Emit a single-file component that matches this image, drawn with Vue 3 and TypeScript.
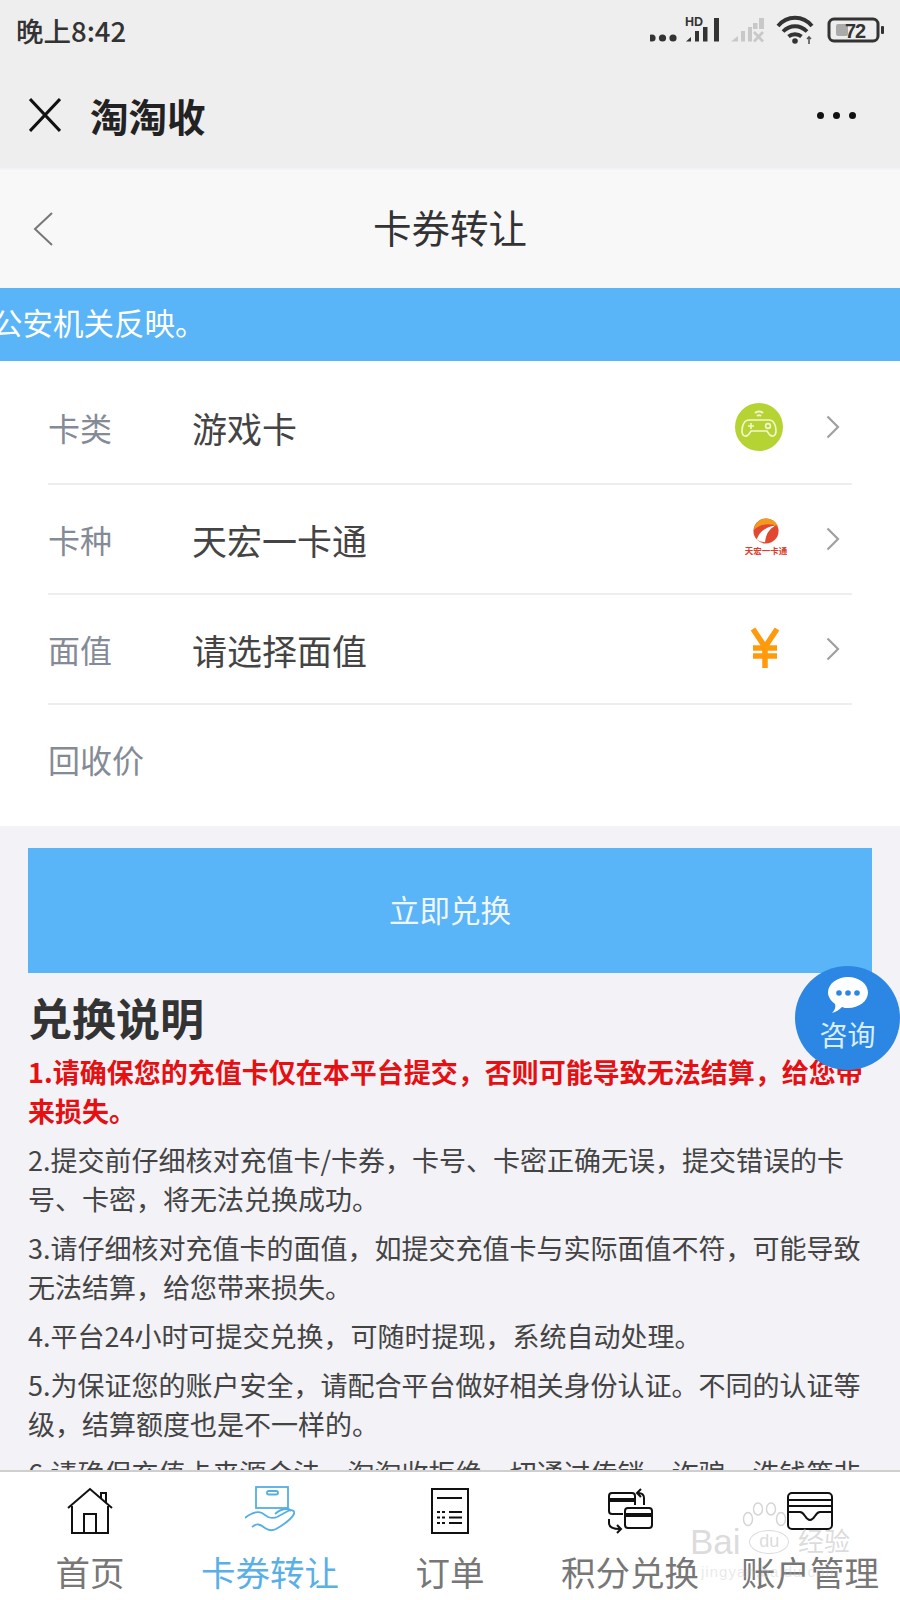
<template>
  <div class="phone">
    <div class="top-bar">
      <div class="status">
        <span class="time">晚上8:42</span>
        <svg class="status-icons" width="250" height="40" viewBox="650 10 250 40">
          <g fill="#333">
            <circle cx="652" cy="38" r="3.6" />
            <circle cx="662.5" cy="38" r="3.6" />
            <circle cx="673" cy="38" r="3.6" />
            <text x="685" y="26" font-size="12.5" font-weight="700" font-family="'Liberation Sans', sans-serif">HD</text>
            <path d="M686 41.5 L691 37 V41.5Z" />
            <rect x="695" y="31" width="4" height="10.5" />
            <rect x="703" y="27" width="4.5" height="14.5" />
            <rect x="714" y="18" width="5" height="23.5" />
          </g>
          <g fill="#c8c8c8">
            <path d="M731 41.5 L738 36 V41.5Z" />
            <rect x="741" y="31" width="4" height="10.5" />
            <rect x="748" y="27" width="4" height="14.5" />
            <rect x="753" y="23" width="4.5" height="6" />
            <rect x="759" y="18" width="5" height="11" />
            <path d="M754 32 L763 41.5 M763 32 L754 41.5" stroke="#c8c8c8" stroke-width="2.6" fill="none" />
          </g>
          <g fill="none" stroke="#333" stroke-width="3.8">
            <path d="M778 26 C787 15 803 15 812 26" />
            <path d="M783 31.5 C790 24.5 800 24.5 807 31.5" />
            <path d="M788.5 36.5 C792 33.5 798 33.5 801.5 36.5" />
          </g>
          <circle cx="795" cy="41" r="2.8" fill="#333" />
          <path d="M809 37 V44 M807 39 L809 37 L811 39" stroke="#555" stroke-width="1.6" fill="none" />
          <rect x="829" y="19" width="49" height="22" rx="5" fill="none" stroke="#333" stroke-width="3" />
          <rect x="836" y="24" width="12" height="12" rx="2" fill="#aaa" />
          <text x="845" y="38" font-size="20" font-weight="700" fill="#333" font-family="'Liberation Sans', sans-serif" textLength="21">72</text>
          <rect x="881" y="26" width="3" height="8" rx="1" fill="#333" />
        </svg>
      </div>
      <div class="title-bar">
        <svg class="close-icon" width="32" height="34" viewBox="0 0 32 34">
          <path d="M1 1 L31 33 M31 1 L1 33" stroke="#111" stroke-width="3" fill="none" />
        </svg>
        <span class="app-title">淘淘收</span>
        <span class="more"><i /><i /><i /></span>
      </div>
    </div>

    <div class="nav-bar">
      <svg class="back-icon" width="20" height="34" viewBox="0 0 20 34">
        <path d="M19 1 L2 17 L19 33" stroke="#777" stroke-width="2" fill="none" />
      </svg>
      <span class="nav-title">卡券转让</span>
    </div>

    <div class="banner"><span>公安机关反映。</span></div>

    <div class="content">
      <div class="form">
        <div v-for="row in rows" :key="row.label" class="row">
          <span class="row-label">{{ row.label }}</span>
          <span class="row-value">{{ row.value }}</span>
          <svg v-if="row.icon === 'game'" class="game-icon" width="48" height="48" viewBox="0 0 48 48">
            <circle cx="24" cy="24" r="24" fill="#b6d334" />
            <g fill="none" stroke="#f3f7cf" stroke-width="1.6">
              <path d="M14 17 H34 C39 17 41 23 41 28 C41 33 37 35 34 31 L32 28 H16 L14 31 C11 35 7 33 7 28 C7 23 9 17 14 17Z" />
              <path d="M13 23 H19 M16 20 V26" />
              <circle cx="33" cy="23" r="2.4" />
              <path d="M20 10 C22 8 26 8 28 10 M22 13 C23 12 25 12 26 13" stroke-width="2" />
            </g>
          </svg>
          <span v-else-if="row.icon === 'tianhong'" class="th-logo">
            <svg width="26" height="26" viewBox="0 0 28 28">
              <circle cx="14" cy="14" r="13.5" fill="#e2472f" />
              <path d="M1 13 C2 5 8 .5 14 .5 C20 .5 25 4 27 9 C18 5 8 6 1 13Z" fill="#f39a1e" />
              <path d="M4 23 C7 15 14 9 24 8 C18 12 14 16 13 26 C10 26 6 25 4 23Z" fill="#fff" />
            </svg>
            <span class="th-name">天宏一卡通</span>
          </span>
          <svg v-else class="yen-icon" width="30" height="42" viewBox="0 0 30 42">
            <path d="M3 2 L15 20 L27 2 M15 20 V41 M3 21 H27 M3 29 H27" stroke="#ff9a0c" stroke-width="5.5" fill="none" />
          </svg>
          <svg class="chevron" width="14" height="24" viewBox="0 0 14 24">
            <path d="M1.5 1.5 L12 12 L1.5 22.5" stroke="#a0a0a0" stroke-width="2.2" fill="none" />
          </svg>
        </div>
        <div class="row last">
          <span class="row-label">回收价</span>
        </div>
      </div>

      <div class="submit">立即兑换</div>

      <div class="notes">
        <h2>兑换说明</h2>
        <p class="warn">1.请确保您的充值卡仅在本平台提交，否则可能导致无法结算，给您带来损失。</p>
        <p v-for="n in notes" :key="n">{{ n }}</p>
      </div>

      <div class="consult">
        <svg width="40" height="36" viewBox="0 0 40 36">
          <path d="M20 0 C31 0 40 7 40 15.5 C40 24 31 31 20 31 C18 31 16 31 14 30 C11 33 8 35 4 36 C7 33 8 30 7 27 C3 24 0 20 0 15.5 C0 7 9 0 20 0Z" fill="#fff" />
          <circle cx="11" cy="16" r="2.8" fill="#2b87e3" />
          <circle cx="20" cy="16" r="2.8" fill="#2b87e3" />
          <circle cx="29" cy="16" r="2.8" fill="#2b87e3" />
        </svg>
        <span>咨询</span>
      </div>
    </div>

    <div class="tabs">
      <div v-for="tab in tabs" :key="tab.name" class="tab" :class="{ active: tab.name === '卡券转让' }">
        <svg v-if="tab.icon === 'home'" width="46" height="46" viewBox="0 0 46 46">
          <g fill="none" stroke="#111" stroke-width="2">
            <path d="M1 20 L23 1 L45 20" />
            <path d="M34 10 V5 H39 V15" />
            <path d="M5 18 V45 H41 V18" />
            <path d="M17 45 V26 H29 V45" />
          </g>
        </svg>
        <svg v-else-if="tab.icon === 'hand'" width="50" height="50" viewBox="0 0 50 50">
          <g fill="none" stroke="#55aee6" stroke-width="1.8">
            <rect x="11" y="1" width="32" height="21" />
            <rect x="22" y="5" width="11" height="3.5" rx="1.7" />
            <path d="M0 32 C6 27 12 25 17 27 L23 31 C26 32 30 32 32 31" />
            <path d="M7 41 C12 37 15 38 20 42 C24 45 27 45 31 43 C38 39 46 34 49 28 C50 25 47 23 43 25 L32 31" />
            <path d="M30 28 C33 25 38 23 42 23 C45 23 46 24 45 25" />
          </g>
        </svg>
        <svg v-else-if="tab.icon === 'order'" width="38" height="46" viewBox="0 0 38 46">
          <g fill="none" stroke="#111" stroke-width="2">
            <rect x="1" y="1" width="36" height="44" />
            <path d="M6 10 H31" />
            <path d="M6 24 H9 M11 24 H14 M18 24 H31 M6 29.5 H9 M11 29.5 H14 M18 29.5 H31 M6 35 H9 M11 35 H14 M18 35 H31" />
          </g>
        </svg>
        <svg v-else-if="tab.icon === 'swap'" width="46" height="46" viewBox="0 0 46 46">
          <g fill="none" stroke="#111" stroke-width="2">
            <path d="M16 26 H5 C3 26 2 25 2 23 V8 C2 6 3 5 5 5 H25 C27 5 28 6 28 8 V17" />
            <rect x="18" y="20" width="27" height="20" rx="3" />
            <path d="M37 17 V10 C37 7 35 5 31 5 M34 1 L30 5 L34 9" />
            <path d="M2 31 V35 C2 39 5 41 13 41 M10 37 L14 41 L10 45" />
          </g>
          <rect x="2" y="10" width="26" height="4" fill="#111" />
          <rect x="18" y="25" width="27" height="4" fill="#111" />
        </svg>
        <svg v-else width="46" height="38" viewBox="0 0 46 38">
          <g fill="none" stroke="#111" stroke-width="2">
            <rect x="1" y="1" width="44" height="36" rx="4" />
            <path d="M1 8 H45 M1 14 H45" />
            <path d="M1 20 H13 C18 20 18 28 23 28 C28 28 28 20 33 20 H45" />
          </g>
        </svg>
        <span class="tab-name">{{ tab.name }}</span>
      </div>
    </div>

    <div class="watermark">
      <svg width="44" height="32" viewBox="0 0 44 32">
        <g fill="none" stroke="#d4d4d4" stroke-width="1.4">
          <ellipse cx="6" cy="17" rx="4.5" ry="6.5" />
          <ellipse cx="16" cy="7" rx="4.5" ry="6" />
          <ellipse cx="29" cy="7" rx="4.5" ry="6" />
          <ellipse cx="39" cy="17" rx="4.5" ry="6.5" />
        </g>
      </svg>
      <div class="wm-line">
        <span class="wm-bai">Bai</span>
        <span class="wm-du">du</span>
        <span class="wm-cn">经验</span>
      </div>
      <div class="wm-url">jingyan.baidu.com</div>
    </div>
  </div>
</template>

<script setup lang="ts">
const rows = [
  { label: '卡类', value: '游戏卡', icon: 'game' },
  { label: '卡种', value: '天宏一卡通', icon: 'tianhong' },
  { label: '面值', value: '请选择面值', icon: 'yen' }
]

const notes = [
  '2.提交前仔细核对充值卡/卡券，卡号、卡密正确无误，提交错误的卡号、卡密，将无法兑换成功。',
  '3.请仔细核对充值卡的面值，如提交充值卡与实际面值不符，可能导致无法结算，给您带来损失。',
  '4.平台24小时可提交兑换，可随时提现，系统自动处理。',
  '5.为保证您的账户安全，请配合平台做好相关身份认证。不同的认证等级，结算额度也是不一样的。',
  '6.请确保充值卡来源合法，淘淘收拒绝一切通过传销、诈骗、洗钱等非法途径获得的充值卡。'
]

const tabs = [
  { name: '首页', icon: 'home' },
  { name: '卡券转让', icon: 'hand' },
  { name: '订单', icon: 'order' },
  { name: '积分兑换', icon: 'swap' },
  { name: '账户管理', icon: 'wallet' }
]
</script>

<style scoped>
.phone {
  position: relative;
  width: 900px;
  height: 1600px;
  overflow: hidden;
  display: flex;
  flex-direction: column;
  background: #f2f2f7;
  font-family: "Noto Sans CJK SC", "Liberation Sans", sans-serif;
}

.top-bar {
  flex: 0 0 168px;
  background: #eeeeee;
}

.status {
  height: 62px;
  display: flex;
  align-items: flex-start;
  justify-content: space-between;
  padding-left: 16px;
}

.time {
  margin-top: 10px;
  font-size: 27.5px;
  line-height: 40px;
  font-weight: 500;
  color: #333;
}

.status-icons {
  margin-top: 10px;
}

.title-bar {
  height: 106px;
  display: flex;
  align-items: center;
  padding: 0 44px 0 29px;
}

.close-icon {
  margin-right: 29px;
}

.app-title {
  font-size: 38.5px;
  font-weight: 700;
  color: #222;
}

.more {
  margin-left: auto;
  display: flex;
  gap: 9px;
}

.more i {
  width: 7px;
  height: 7px;
  border-radius: 50%;
  background: #111;
}

.nav-bar {
  flex: 0 0 118px;
  box-sizing: border-box;
  margin-top: 2px;
  padding-bottom: 6px;
  position: relative;
  display: flex;
  align-items: center;
  justify-content: center;
  background: #f8f8f8;
}

.back-icon {
  position: absolute;
  left: 33px;
  top: 42px;
}

.nav-title {
  font-size: 38.5px;
  color: #333;
}

.banner {
  flex: 0 0 73px;
  box-sizing: border-box;
  padding-bottom: 5px;
  display: flex;
  align-items: center;
  overflow: hidden;
  background: #5ab4f8;
  color: #fff;
  font-size: 30.5px;
}

.banner span {
  margin-left: -8px;
  white-space: nowrap;
}

.content {
  flex: 1 1 auto;
  min-height: 0;
  position: relative;
  overflow: hidden;
}

.form {
  height: 465px;
  box-sizing: border-box;
  padding: 14px 48px 0;
  background: #fff;
}

.row {
  height: 110px;
  box-sizing: border-box;
  display: flex;
  align-items: center;
  border-bottom: 2px solid #eeeeee;
}

.row:first-child {
  padding-bottom: 4px;
}

.row.last {
  height: 112px;
  padding-bottom: 4px;
  border-bottom: 0;
}

.row-label {
  width: 144px;
  font-size: 32px;
  color: #858b96;
}

.row-value {
  flex: 1;
  font-size: 35px;
  color: #444;
}

.chevron {
  margin: 0 12px 0 0;
}

.game-icon {
  margin-right: 43px;
}

.yen-icon {
  margin-right: 46px;
  margin-bottom: 2px;
}

.th-logo {
  width: 44px;
  margin-right: 38px;
  display: flex;
  flex-direction: column;
  align-items: center;
  margin-bottom: 4px;
}

.th-name {
  font-size: 8.5px;
  line-height: 12px;
  color: #d9402c;
  white-space: nowrap;
  font-weight: 700;
}

.submit {
  height: 125px;
  box-sizing: border-box;
  padding-bottom: 4px;
  margin: 22px 28px 0;
  display: flex;
  align-items: center;
  justify-content: center;
  background: #5ab4f8;
  color: #eef7ff;
  font-size: 30.5px;
}

.notes {
  padding: 14px 28px 0;
  font-size: 27px;
  line-height: 39px;
  color: #444;
}

.notes h2 {
  margin: 0 0 5px;
  font-size: 44px;
  line-height: 60px;
  font-weight: 700;
  color: #333;
}

.notes p {
  margin: 0 0 10px;
}

.notes p.warn {
  font-weight: 700;
  color: #e60f12;
}

.consult {
  position: absolute;
  left: 795px;
  top: 605px;
  width: 105px;
  height: 104px;
  box-sizing: border-box;
  padding-top: 11px;
  border-radius: 50%;
  background: #2b87e3;
  display: flex;
  flex-direction: column;
  align-items: center;
  color: #d8eeff;
  font-size: 28px;
  line-height: 38px;
}

.consult svg {
  margin-bottom: 2px;
}

.tabs {
  flex: 0 0 130px;
  display: flex;
  box-sizing: border-box;
  border-top: 2px solid #cfcfcf;
  background: #fff;
}

.tab {
  flex: 1;
  display: flex;
  flex-direction: column;
  align-items: center;
  color: #777;
}

.tab svg {
  height: 50px;
  margin-top: 14px;
}

.tab-name {
  margin-top: 12px;
  font-size: 34.5px;
  line-height: 46px;
  white-space: nowrap;
}

.tab.active .tab-name {
  color: #5ab0e6;
}

.watermark {
  position: absolute;
  left: 690px;
  top: 1502px;
  width: 160px;
  display: flex;
  flex-direction: column;
  align-items: center;
  color: rgba(190, 190, 190, 0.55);
  pointer-events: none;
}

.watermark svg {
  margin-left: 0;
  margin-right: 12px;
}

.wm-line {
  width: 160px;
  display: flex;
  align-items: center;
  justify-content: space-between;
  margin-top: -6px;
  line-height: 28px;
  font-family: "Liberation Sans", "Noto Sans CJK SC", sans-serif;
}

.wm-bai {
  font-size: 35px;
}

.wm-du {
  width: 40px;
  height: 24px;
  border: 1.5px solid rgba(190, 190, 190, 0.55);
  border-radius: 50%;
  box-sizing: border-box;
  text-align: center;
  font-size: 18px;
  line-height: 20px;
}

.wm-cn {
  font-size: 26px;
}

.wm-url {
  margin-top: 8px;
  font-size: 15px;
  line-height: 16px;
  font-family: "Liberation Sans", sans-serif;
  letter-spacing: 1px;
  color: rgba(190, 190, 190, 0.35);
}
</style>

<style>
html,
body {
  margin: 0;
  background: #f2f2f7;
}
</style>
